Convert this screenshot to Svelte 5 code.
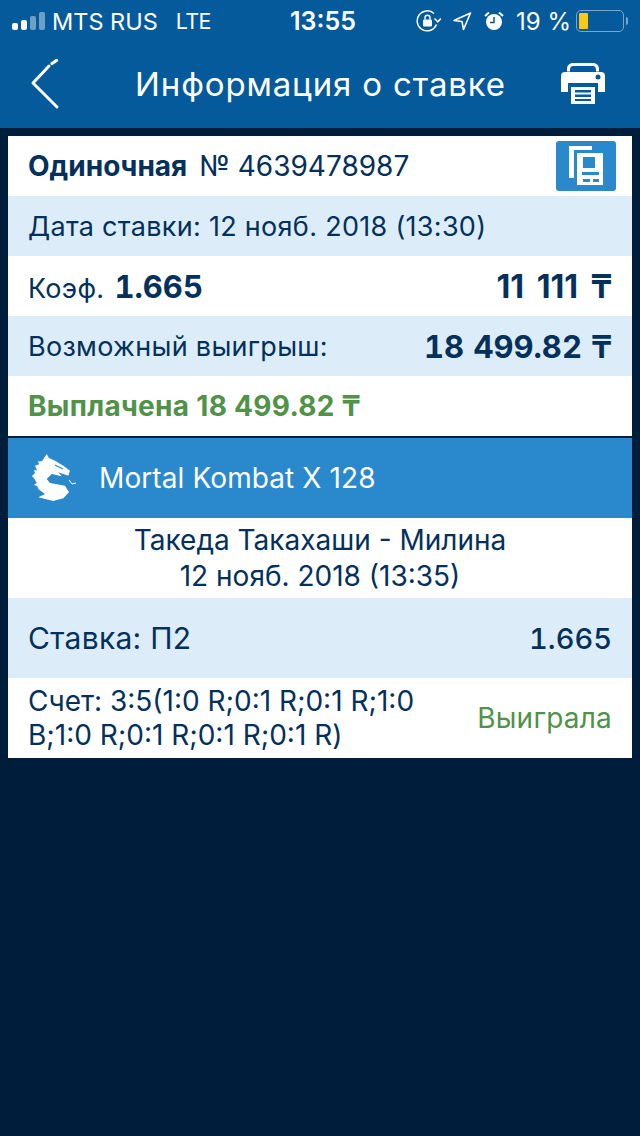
<script>
    const signal = [7, 10, 14, 18]
</script>

<div class="page">
    <header>
        <div class="status">
            <div class="status-left">
                <div class="signal">
                    {#each signal as h, i}
                        <span class:off={i > 1} style="height: {h}px"></span>
                    {/each}
                </div>
                <span class="carrier">MTS RUS</span>
                <span class="net">LTE</span>
            </div>
            <span class="clock">13:55</span>
            <div class="status-right">
                <svg width="25" height="22" viewBox="0 0 25 22" fill="none">
                    <path d="M20.500 14.500A10 10 0 1 1 18 3.500" stroke="#fff" stroke-width="1.500" />
                    <path d="M18.500 8.500l3.300 3.300 3-3.300" stroke="#fff" stroke-width="1.500" />
                    <rect x="7" y="9.500" width="9" height="7" rx="1" fill="#fff" />
                    <path d="M9 9.500V7.800a2.500 2.500 0 0 1 5 0v1.700" stroke="#fff" stroke-width="1.400" />
                </svg>
                <svg class="gps" width="20" height="20" viewBox="0 0 20 20" fill="none">
                    <path d="M18.500 2L2 9.500l8 1 1.500 8z" stroke="#fff" stroke-width="1.600" stroke-linejoin="round" />
                </svg>
                <svg class="alarm" width="20" height="20" viewBox="0 0 20 20">
                    <circle cx="10" cy="11" r="8" fill="#fff" />
                    <path d="M10 6v5.500H6" stroke="#055a9c" stroke-width="1.500" fill="none" />
                    <path d="M1 5l4-3.500M19 5l-4-3.500" stroke="#fff" stroke-width="2" />
                </svg>
                <span class="percent">19 %</span>
                <div class="battery"><span></span></div>
                <div class="nub"></div>
            </div>
        </div>
        <nav>
            <svg class="back" width="30" height="52" viewBox="0 0 30 52" fill="none">
                <path d="M22 4.500l4.500-3" stroke="#fff" stroke-width="3.200" stroke-linecap="round" />
                <path d="M19 7L3 24l24 24" stroke="#fff" stroke-width="3" stroke-linecap="round" stroke-linejoin="round" />
            </svg>
            <h1>Информация о ставке</h1>
            <svg class="printer" width="44" height="42" viewBox="0 0 44 42">
                <path d="M6 9.500V7c0-3.500 2.500-6 6-6h20c3.500 0 6 2.500 6 6v2.500h-3V7.500C35 5 33.500 4 32 4H12c-1.500 0-3 1-3 3.500v2z" fill="#fff" />
                <path d="M4 10h36a4 4 0 0 1 4 4v16h-7V21H7v9H0V14a4 4 0 0 1 4-4z" fill="#fff" />
                <circle cx="37" cy="15" r="2.500" fill="#055a9c" />
                <path d="M10 25h24v17H10z" fill="#fff" />
                <path d="M14 28h16v2.500H14zM14 32.500h16V35H14zM14 37h16v2H14z" fill="#055a9c" />
            </svg>
        </nav>
    </header>

    <main>
        <section class="bet">
            <div class="row white first">
                <div class="title"><b>Одиночная</b><span>№ 4639478987</span></div>
                <div class="copy">
                    <svg width="60" height="50" viewBox="0 0 60 50">
                        <path d="M13 5h23v4H18v28h-5z" fill="#fff" />
                        <path d="M21 12h26v32H21z" fill="#fff" />
                        <path d="M27 16h12v11H27zM26 31h17v3H26zM27 38h7v3h-7zM37 38h6v3h-6z" fill="#2a88cd" />
                    </svg>
                </div>
            </div>
            <div class="row light"><span class="text">Дата ставки: 12 нояб. 2018 (13:30)</span></div>
            <div class="row white">
                <div class="coef"><span class="text">Коэф.</span><b class="big">1.665</b></div>
                <b class="big amount">11 111 ₸</b>
            </div>
            <div class="row light">
                <span class="text">Возможный выигрыш:</span>
                <b class="big">18 499.82 ₸</b>
            </div>
            <div class="row white"><b class="paid">Выплачена 18 499.82 ₸</b></div>
        </section>

        <section class="match">
            <div class="league">
                <svg width="46" height="48" viewBox="0 0 46 48">
                    <path d="M15.700 0L18 4l6 2.700 8.300 5L39 16.700l-1.700 5-10-3.400 3.400 4-10-2.300-5 5 3.300 4 15 2.700 4 6.600-5.700 6-10 2.700-15-3.700 6.700-3.300-6.700-5-1-3-3.500-1 3-2-2-3.500L1 22l3-3-1-3 3 .5L4 11.700l4-1.500-1-3 4 .1z" fill="#fff" />
                    <path d="M24 11l8 4" stroke="#2a88cd" stroke-width="1.200" />
                    <path d="M38 26l3 4 4-1" stroke="#fff" stroke-width="1" fill="none" />
                </svg>
                <span>Mortal Kombat X 128</span>
            </div>
            <div class="teams">
                <span>Такеда Такахаши - Милина</span>
                <span>12 нояб. 2018 (13:35)</span>
            </div>
            <div class="pick">
                <span class="pick-name">Ставка: П2</span>
                <span class="pick-coef">1.665</span>
            </div>
            <div class="score">
                <span class="score-text">Счет: 3:5(1:0 R;0:1 R;0:1 R;1:0 B;1:0 R;0:1 R;0:1 R;0:1 R)</span>
                <span class="won">Выиграла</span>
            </div>
        </section>
    </main>
</div>

<style>
    :global(body) {
        margin: 0;
        background: #001d3b;
    }

    .page {
        height: 1136px;
        overflow: hidden;
        background: #001d3b;
        font-family: Inter, "Noto Sans", sans-serif;
        color: #04305c;
    }

    header {
        height: 128px;
        background: #055a9c;
        color: #fff;
    }

    .status {
        position: relative;
        display: flex;
        align-items: center;
        justify-content: space-between;
        height: 42px;
        padding: 0 12px;
        font-size: 24px;
    }

    .status-left,
    .status-right {
        display: flex;
        align-items: center;
    }

    .signal {
        display: flex;
        align-items: flex-end;
        gap: 3px;
        margin-right: 7px;
    }

    .signal span {
        width: 6px;
        border-radius: 2px;
        background: #fff;
    }

    .signal span.off {
        background: #6f9fc6;
    }

    .carrier {
        font-size: 23.500px;
    }

    .net {
        margin-left: 18px;
        font-size: 21.500px;
        letter-spacing: -.6px;
    }

    .clock {
        position: absolute;
        left: 290px;
        font-size: 25px;
        font-weight: 600;
    }

    .gps {
        margin-left: 11px;
    }

    .alarm {
        margin-left: 12px;
    }

    .percent {
        margin-left: 12px;
        font-size: 24px;
    }

    .battery {
        box-sizing: border-box;
        width: 48px;
        height: 22px;
        margin-left: 5px;
        padding: 2px;
        border: 1.500px solid #7aa6cb;
        border-radius: 5px;
    }

    .battery span {
        display: block;
        width: 9px;
        height: 100%;
        border-radius: 1px;
        background: #f6cb11;
    }

    .nub {
        width: 2px;
        height: 8px;
        margin-left: 2px;
        border-radius: 0 2px 2px 0;
        background: #7aa6cb;
    }

    nav {
        display: flex;
        align-items: center;
        height: 86px;
        padding: 0 35px 0 30px;
    }

    .back {
        flex: none;
    }

    h1 {
        flex: 1;
        margin: 0 0 2px;
        padding-left: 20px;
        text-align: center;
        font-size: 33px;
        font-weight: 400;
        letter-spacing: .85px;
        white-space: nowrap;
    }

    .printer {
        flex: none;
        margin-bottom: 4px;
    }

    main {
        padding: 8px 8px 0;
    }

    .bet {
        margin-bottom: 2px;
    }

    .row {
        box-sizing: border-box;
        display: flex;
        align-items: center;
        justify-content: space-between;
        height: 60px;
        padding: 0 20px;
    }

    .white {
        background: #fff;
    }

    .light {
        background: #dcedf9;
    }

    .text {
        font-size: 27px;
        letter-spacing: .3px;
    }

    .big {
        font-size: 31px;
        font-weight: 700;
        font-feature-settings: "tnum";
        word-spacing: 1px;
    }

    .amount {
        font-size: 32px;
        font-feature-settings: normal;
        word-spacing: 5px;
    }

    .first {
        padding-right: 16px;
    }

    .title {
        display: flex;
        align-items: baseline;
        gap: 12px;
        font-size: 28px;
    }

    .title b {
        font-weight: 700;
    }

    .copy {
        width: 60px;
        height: 50px;
        border-radius: 3px;
        background: #2a88cd;
    }

    .copy svg {
        display: block;
    }

    .coef {
        display: flex;
        align-items: baseline;
        gap: 10px;
    }

    .paid {
        font-size: 28px;
        font-weight: 700;
        letter-spacing: .3px;
        color: #4f9248;
    }

    .league {
        display: flex;
        align-items: center;
        gap: 22px;
        height: 80px;
        padding-left: 23px;
        background: #2a88cd;
        color: #fff;
        font-size: 28px;
        letter-spacing: .1px;
    }

    .teams {
        display: flex;
        flex-direction: column;
        align-items: center;
        justify-content: center;
        gap: 2px;
        height: 80px;
        background: #fff;
        font-size: 28px;
    }

    .pick {
        display: flex;
        align-items: center;
        justify-content: space-between;
        height: 80px;
        padding: 0 20px;
        background: #dcedf9;
    }

    .pick-name {
        font-size: 30px;
        letter-spacing: .3px;
    }

    .pick-coef {
        font-size: 29px;
        font-weight: 500;
        font-feature-settings: "tnum";
    }

    .score {
        display: flex;
        align-items: center;
        justify-content: space-between;
        height: 80px;
        padding: 0 20px;
        background: #fff;
    }

    .score-text {
        width: 400px;
        font-size: 28px;
        line-height: 34px;
    }

    .won {
        font-size: 28px;
        letter-spacing: .2px;
        color: #4f9248;
    }
</style>
